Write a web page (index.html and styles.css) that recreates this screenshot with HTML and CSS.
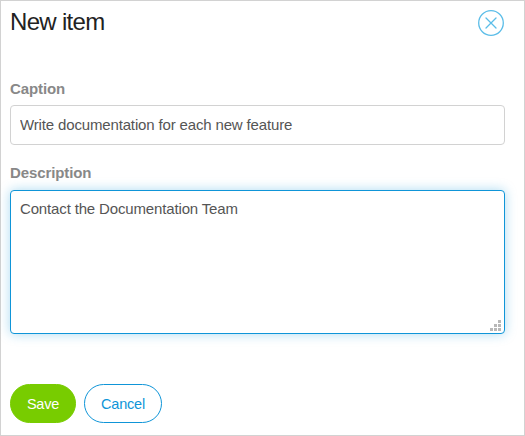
FILE: index.html
```html
<!DOCTYPE html>
<html lang="en">
<head>
<meta charset="utf-8">
<title>New item</title>
<link rel="stylesheet" href="styles.css">
</head>
<body>
<form class="dialog">
  <header class="header">
    <h1 class="title">New item</h1>
    <button class="close" type="button" aria-label="Close">
      <svg width="26" height="26" viewBox="0 0 26 26" fill="none" stroke="#5bbde8" stroke-width="1.3">
        <circle cx="13" cy="13" r="12.3"/>
        <path d="M8 8L18 18M18 8L8 18" stroke-linecap="round"/>
      </svg>
    </button>
  </header>
  <label class="label" for="caption">Caption</label>
  <input class="field" id="caption" type="text" value="Write documentation for each new feature">
  <label class="label" for="description">Description</label>
  <div class="area">
    <textarea class="field active" id="description">Contact the Documentation Team</textarea>
    <svg class="grip" width="11" height="11" viewBox="0 0 11 11" fill="#b8b8b8">
      <path d="M8 0h3v3h-3zM4 4h3v3h-3zM8 4h3v3h-3zM0 8h3v3h-3zM4 8h3v3h-3zM8 8h3v3h-3z"/>
    </svg>
  </div>
  <footer class="actions">
    <button class="button save" type="button">Save</button>
    <button class="button cancel" type="button">Cancel</button>
  </footer>
</form>
</body>
</html>
```

FILE: styles.css
```css
* {
  box-sizing: border-box;
}

body {
  margin: 0;
  background: #fff;
  font-family: "Liberation Sans", Arial, sans-serif;
}

.dialog {
  display: flex;
  flex-direction: column;
  width: 525px;
  height: 436px;
  padding: 9px 19px 0 9px;
  border: 1px solid #d2d2d2;
}

.header {
  display: flex;
  justify-content: space-between;
  height: 70px;
}

.title {
  margin: -2px 0 0;
  color: #222;
  font-size: 24px;
  font-weight: 400;
  letter-spacing: -0.7px;
  line-height: 28px;
}

.close {
  width: 26px;
  height: 26px;
  margin-right: 1px;
  padding: 0;
  border: 0;
  background: none;
}

.close svg {
  display: block;
}

.label {
  height: 25px;
  color: #888;
  font-size: 15px;
  font-weight: 700;
  letter-spacing: -0.1px;
  line-height: 18px;
}

.field {
  display: block;
  width: 100%;
  height: 40px;
  padding: 0 9px;
  border: 1px solid #d2d2d2;
  border-radius: 4px;
  outline: none;
  background: #fff;
  color: #555;
  font: 15px/20px "Liberation Sans", Arial, sans-serif;
  letter-spacing: -0.15px;
}

#caption {
  margin-bottom: 19px;
  padding-bottom: 2px;
}

label[for="description"] {
  height: 26px;
}

.area {
  position: relative;
}

.active {
  height: 144px;
  padding-top: 8px;
  border-color: #0f95d8;
  box-shadow: 0 0 12px rgba(15, 149, 216, 0.35);
  resize: none;
}

.grip {
  position: absolute;
  right: 4px;
  bottom: 3px;
}

.actions {
  display: flex;
  gap: 8px;
  margin-top: 50px;
}

.button {
  height: 39px;
  padding: 0;
  border: 1px solid #78cc00;
  border-radius: 20px;
  font: 14.5px/20px "Liberation Sans", Arial, sans-serif;
  letter-spacing: -0.2px;
}

.save {
  width: 66px;
  background: #78cc00;
  color: #fff;
}

.cancel {
  width: 78px;
  border-color: #0f95d8;
  background: #fff;
  color: #0f95d8;
}
```
